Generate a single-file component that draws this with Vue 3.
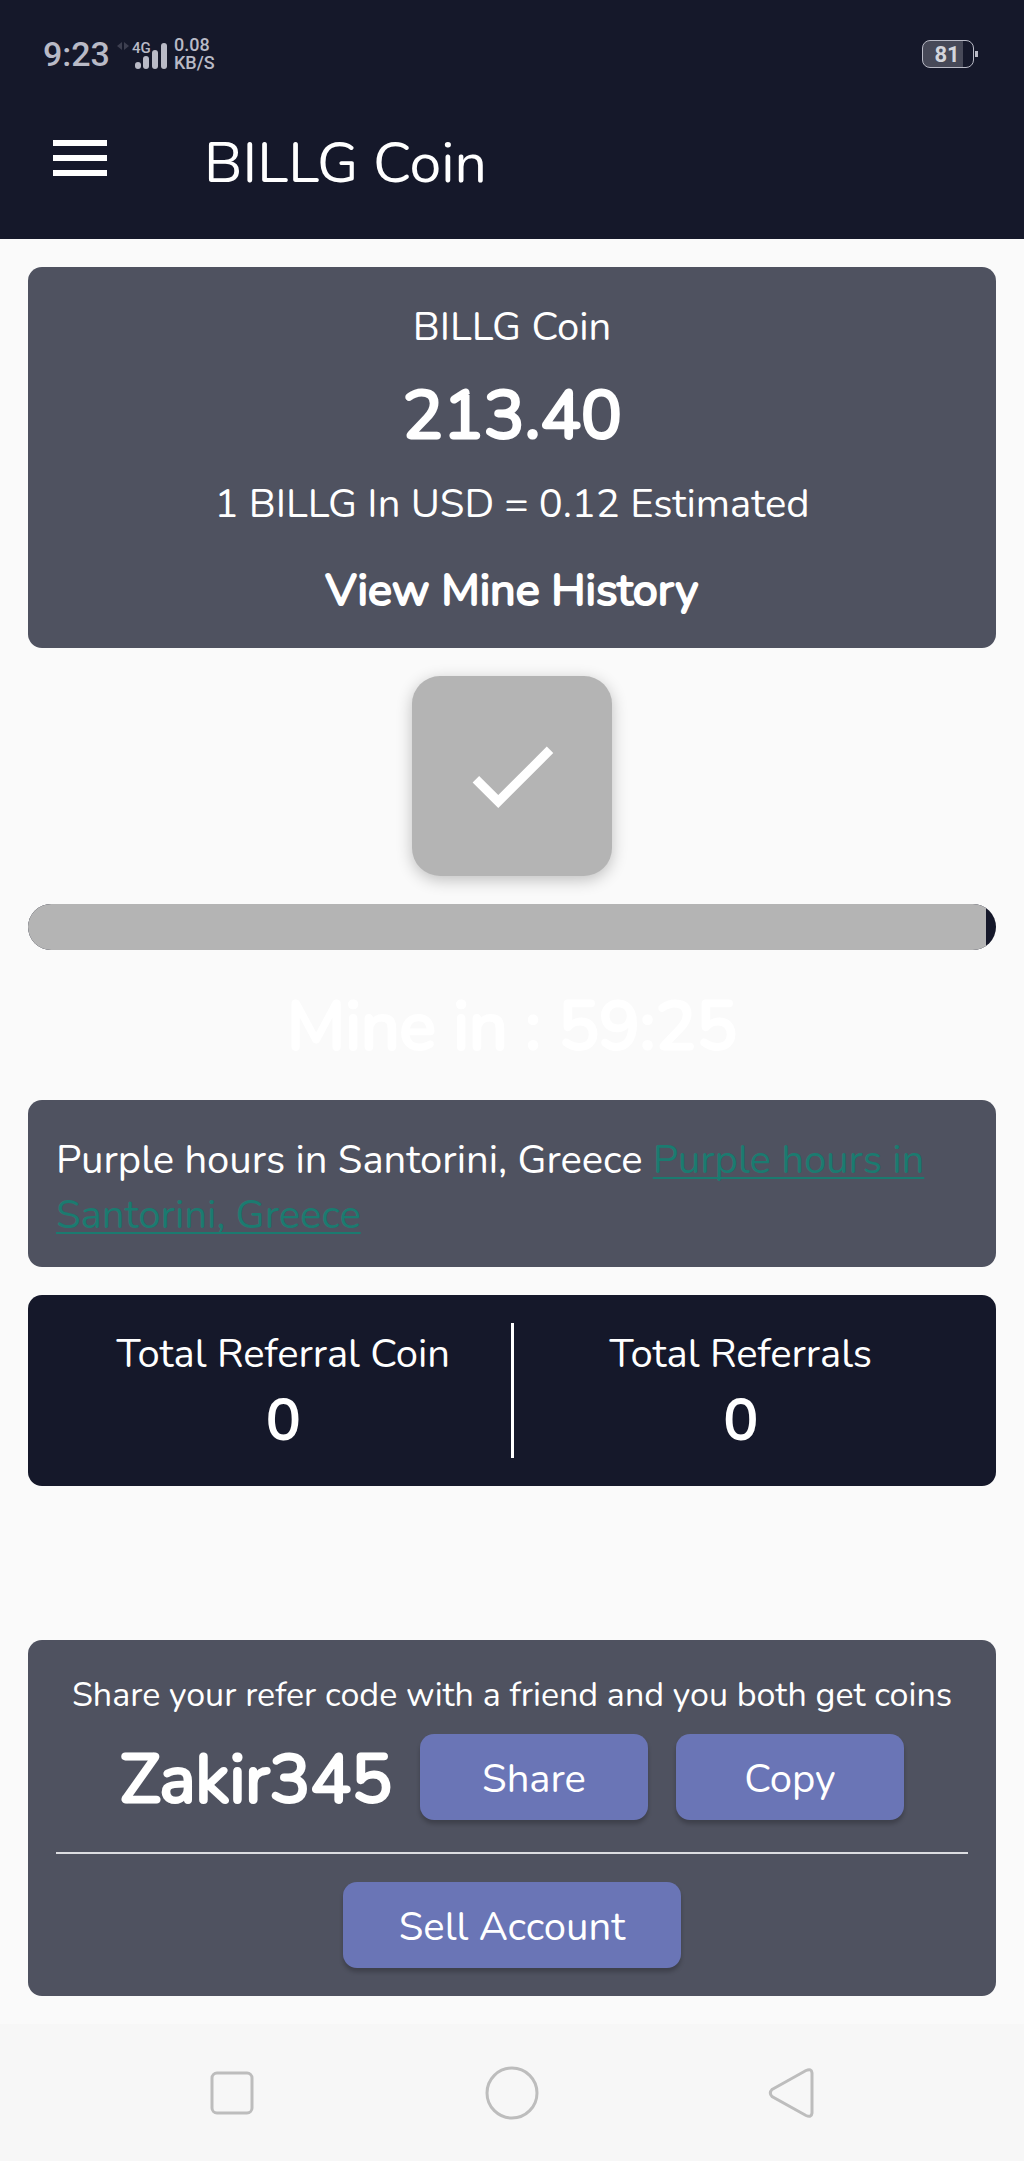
<script setup>
import { ref } from 'vue'

const balance = ref('213.40')
const referCode = ref('Zakir345')
const progress = ref(99)
const stats = [
  { label: 'Total Referral Coin', value: 0 },
  { label: 'Total Referrals', value: 0 },
]
</script>

<template>
  <div class="screen">
    <header class="top">
      <div class="status">
        <div class="status-left">
          <span class="clock">9:23</span>
          <svg class="signal" width="52" height="30" viewBox="0 0 52 30" aria-hidden="true">
            <path d="M6 3v8L1 7zM8 3v8l5-4z" fill="#3d3f50" />
            <text x="16" y="14" class="net">4G</text>
            <g fill="#b9bac6">
              <rect x="19" y="23" width="6" height="7" rx="3" />
              <rect x="27" y="17" width="6" height="13" rx="3" />
              <rect x="36" y="11" width="6" height="19" rx="3" />
              <rect x="45" y="4" width="6" height="26" rx="3" />
            </g>
          </svg>
          <span class="speed"><span>0.08</span><span>KB/S</span></span>
        </div>
        <div class="battery"><span class="level">81</span></div>
      </div>
      <div class="appbar">
        <button class="menu" type="button" aria-label="Menu">
          <svg width="72" height="72" viewBox="0 0 24 24" fill="#fff"><path d="M3 18h18v-2H3v2zm0-5h18v-2H3v2zm0-7v2h18V6H3z" /></svg>
        </button>
        <h1>BILLG Coin</h1>
      </div>
    </header>

    <main>
      <section class="card balance">
        <p class="body">BILLG Coin</p>
        <p class="amount">{{ balance }}</p>
        <p class="body">1 BILLG In USD = 0.12 Estimated</p>
        <a class="history" href="#history">View Mine History</a>
      </section>

      <button class="mine" type="button" aria-label="Mine">
        <svg width="110" height="110" viewBox="0 0 24 24" fill="#fff"><path d="M9 16.17L4.83 12l-1.42 1.41L9 19 21 7l-1.41-1.41z" /></svg>
      </button>

      <div class="track" role="progressbar" :aria-valuenow="progress">
        <div class="fill" :style="{ width: progress + '%' }"></div>
      </div>

      <p class="countdown">Mine in : 59:25</p>

      <section class="card news">
        Purple hours in Santorini, Greece <a href="#news">Purple hours in Santorini, Greece</a>
      </section>

      <section class="card stats">
        <div v-for="s in stats" :key="s.label" class="stat">
          <p class="body">{{ s.label }}</p>
          <p class="count">{{ s.value }}</p>
        </div>
      </section>

      <section class="card refer">
        <p class="hint">Share your refer code with a friend and you both get coins</p>
        <div class="code-row">
          <span class="code">{{ referCode }}</span>
          <button class="btn short" type="button">Share</button>
          <button class="btn short" type="button">Copy</button>
        </div>
        <hr />
        <button class="btn sell" type="button">Sell Account</button>
      </section>
    </main>

    <nav class="navbar">
      <button type="button" aria-label="Recent apps">
        <svg width="56" height="56" viewBox="0 0 56 56"><rect x="8" y="8" width="40" height="40" rx="5" /></svg>
      </button>
      <button type="button" aria-label="Home">
        <svg width="56" height="56" viewBox="0 0 56 56"><circle cx="28" cy="28" r="25" /></svg>
      </button>
      <button type="button" aria-label="Back">
        <svg width="56" height="56" viewBox="0 0 56 56"><path d="M8 24.500L42 5.500Q47.500 3 48 8V48Q47.500 53 42 50.500L8 31.500Q4.500 28 8 24.500Z" /></svg>
      </button>
    </nav>
  </div>
</template>

<style>
body {
  margin: 0;
  background: #fafafa;
}
</style>

<style scoped>
.screen {
  display: flex;
  flex-direction: column;
  min-height: 100vh;
  background: #fafafa;
  color: #fff;
  font-family: Nunito, Lato, sans-serif;
  font-size: 40px;
  line-height: 55px;
}
.screen * {
  box-sizing: border-box;
}
p, h1 {
  margin: 0;
}
button {
  padding: 0;
  border: 0;
  background: none;
  color: inherit;
  font: inherit;
}
svg {
  display: block;
}
.top {
  background: #15182a;
}
.status {
  display: flex;
  justify-content: space-between;
  align-items: center;
  height: 108px;
  padding: 0 50px 0 43px;
  color: #b9bac6;
  font-family: Roboto, sans-serif;
  font-weight: 500;
}
.status-left {
  display: flex;
  align-items: center;
  gap: 6px;
}
.clock {
  font-size: 34px;
}
.net {
  fill: #b9bac6;
  font-size: 15px;
}
.speed {
  display: flex;
  flex-direction: column;
  font-size: 18px;
  line-height: 18px;
}
.battery {
  position: relative;
  width: 52px;
  height: 28px;
  border: 1px solid #b9bac6;
  border-radius: 8px;
  background: linear-gradient(90deg, #474958 80%, transparent 80%);
}
.battery::after {
  content: "";
  position: absolute;
  top: 10px;
  right: -5px;
  width: 3px;
  height: 6px;
  background: #b9bac6;
}
.level {
  display: block;
  padding-right: 2px;
  color: #d4d5dc;
  font-size: 22px;
  font-weight: 700;
  line-height: 27px;
  text-align: center;
}
.appbar {
  display: flex;
  align-items: flex-start;
  gap: 88px;
  height: 131px;
  padding: 14px 44px;
}
h1 {
  padding-top: 3px;
  font-size: 57px;
  font-weight: 400;
  line-height: 76px;
}
main {
  display: flex;
  flex-direction: column;
  flex: 1;
  padding: 28px;
}
.card {
  padding: 28px;
  border-radius: 14px;
  background: #4f5260;
}
.balance {
  display: flex;
  flex-direction: column;
  align-items: center;
  gap: 12px;
  padding: 33px 28px 25px;
  text-align: center;
}
.amount, .countdown, .code {
  font-size: 68px;
  line-height: 98px;
  -webkit-text-stroke: 3px currentColor;
}
.history {
  margin-top: 14px;
  color: inherit;
  font-size: 45px;
  line-height: 65px;
  text-decoration: none;
  -webkit-text-stroke: 2px currentColor;
}
.mine {
  display: flex;
  justify-content: center;
  align-items: center;
  align-self: center;
  width: 200px;
  height: 200px;
  margin: 28px 0;
  border-radius: 28px;
  background: #b4b4b4;
  box-shadow: 0 4px 16px rgba(0, 0, 0, 0.24);
}
.track {
  height: 46px;
  overflow: hidden;
  border-radius: 23px;
  background: #15182a;
}
.fill {
  height: 100%;
  background: #b4b4b4;
}
.countdown {
  margin: 28px 0 24px;
  text-align: center;
}
.news {
  padding: 33px 28px 24px;
}
.news a {
  color: #1b7b70;
  text-underline-offset: 4px;
  text-decoration-thickness: 2px;
  text-decoration-skip-ink: none;
}
.stats {
  display: flex;
  margin: 28px 0 154px;
  background: #15182a;
  text-align: center;
}
.stat {
  flex: 1;
}
.stat + .stat {
  border-left: 3px solid #fff;
}
.stat .body {
  padding-top: 4px;
}
.count {
  font-size: 57px;
  line-height: 76px;
  -webkit-text-stroke: 2px currentColor;
}
.refer {
  display: flex;
  flex-direction: column;
  align-items: center;
}
.hint {
  font-size: 34px;
  line-height: 54px;
}
.code-row {
  display: flex;
  align-items: center;
  gap: 28px;
  margin-top: 12px;
}
.code {
  padding-top: 6px;
  line-height: 80px;
}
.btn {
  height: 86px;
  padding-top: 4px;
  border-radius: 14px;
  background: #6a75b6;
  box-shadow: 0 4px 4px rgba(0, 0, 0, 0.22);
}
.short {
  width: 228px;
}
.sell {
  padding: 4px 56px 0;
}
hr {
  width: 100%;
  margin: 32px 0 28px;
  border: 0;
  border-top: 2px solid #dcdde1;
}
.navbar {
  display: grid;
  grid-template-columns: repeat(3, 1fr);
  align-items: center;
  justify-items: center;
  height: 137px;
  padding: 0 9%;
  background: #f7f7f7;
}
.navbar svg {
  fill: none;
  stroke: #bdbdbd;
  stroke-width: 3;
}
</style>
